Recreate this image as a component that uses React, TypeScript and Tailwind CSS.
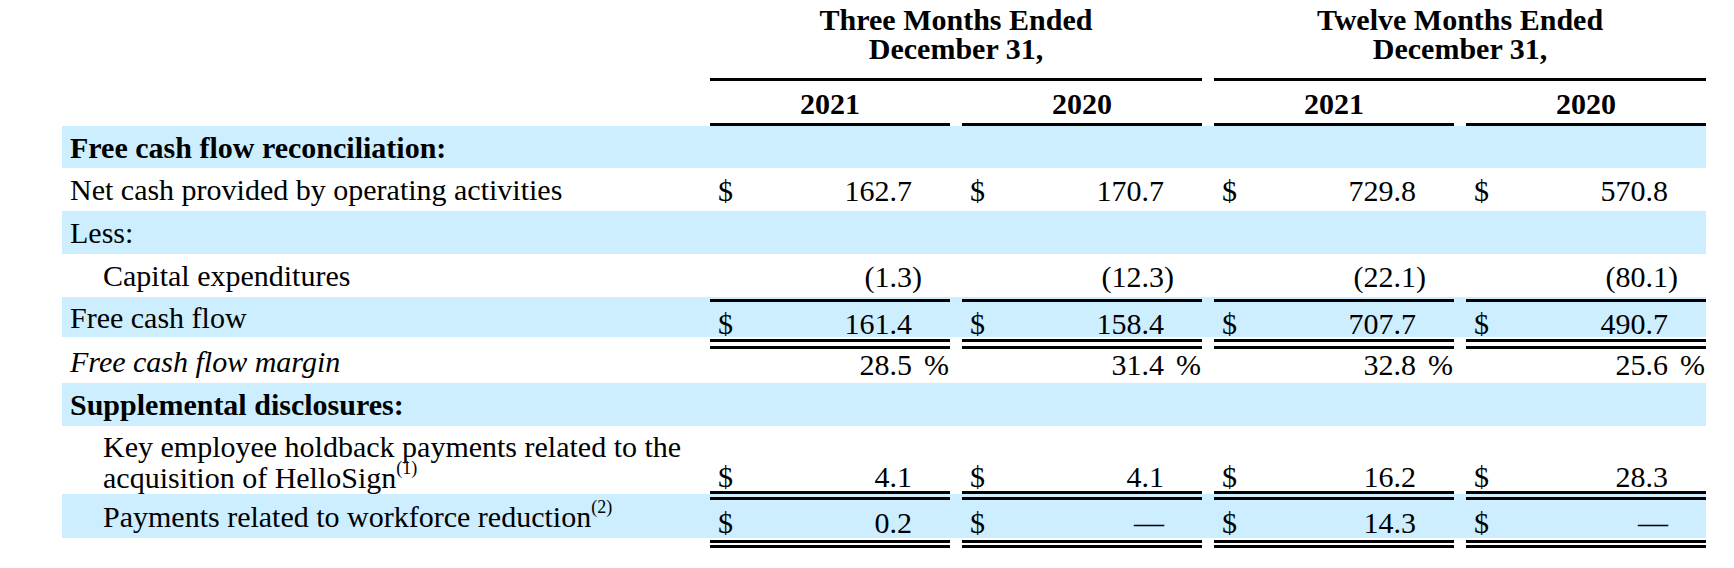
import React from "react"

type Cell = { d?: boolean; v?: string; s?: string; pct?: boolean }

const BLUE = "bg-[#cceeff]"

function ValueCell({
  c,
  top,
  bottom,
  textClass = "items-center",
}: {
  c?: Cell
  top?: string
  bottom?: boolean
  textClass?: string
}) {
  return (
    <div className="flex w-[240px] flex-col">
      {top && <div className={`${top} h-[3px] shrink-0 bg-black`} />}
      <div className={`flex flex-1 ${textClass}`}>
        <span className="w-[34px] pl-2">{c?.d ? "$" : ""}</span>
        <span className="flex-1 text-right">{c?.v}</span>
        <span className={`w-[38px] whitespace-pre ${c?.pct ? "pl-[12px]" : ""}`}>{c?.pct ? "%" : c?.s}</span>
      </div>
      {bottom && <div className="h-[3px] shrink-0 bg-black" />}
    </div>
  )
}

function Row({
  className,
  label,
  labelClass = "items-center pl-2",
  cells,
  top,
  bottom,
  textClass,
}: {
  className: string
  label?: React.ReactNode
  labelClass?: string
  cells?: Cell[]
  top?: string
  bottom?: boolean
  textClass?: string
}) {
  return (
    <div className={`flex ${className}`}>
      <div className={`flex w-[648px] ${labelClass}`}>{label}</div>
      {cells && (
        <div className="flex gap-[12px]">
          {cells.map((c, i) => (
            <ValueCell key={i} c={c} top={top} bottom={bottom} textClass={textClass} />
          ))}
        </div>
      )}
    </div>
  )
}

const groups = [
  { title: "Three Months Ended", years: ["2021", "2020"] },
  { title: "Twelve Months Ended", years: ["2021", "2020"] },
]

export default function App() {
  return (
    <div className="h-[568px] w-[1734px] bg-white pl-[62px] font-['Liberation_Serif','Times_New_Roman',serif] text-[30px] text-black">
      {/* column headers */}
      <div className="flex">
        <div className="w-[648px]" />
        <div className="flex gap-[12px]">
          {groups.map((g) => (
            <div key={g.title} className="flex w-[492px] flex-col">
              <div className="h-[81px] border-b-[3px] border-black pt-[5px] text-center font-bold leading-[29px]">
                {g.title}
                <br />
                December 31,
              </div>
              <div className="flex gap-[12px]">
                {g.years.map((y) => (
                  <div
                    key={y}
                    className="flex h-[45px] w-[240px] items-center justify-center border-b-[3px] border-black pt-[3px] font-bold"
                  >
                    {y}
                  </div>
                ))}
              </div>
            </div>
          ))}
        </div>
      </div>

      <div className="w-[1644px]">
        <Row className={`h-[42px] ${BLUE}`} labelClass="items-center pl-2 font-bold" label="Free cash flow reconciliation:" />
        <Row
          className="h-[43px]"
          label="Net cash provided by operating activities"
          cells={[
            { d: true, v: "162.7" },
            { d: true, v: "170.7" },
            { d: true, v: "729.8" },
            { d: true, v: "570.8" },
          ]}
        />
        <Row className={`h-[43px] ${BLUE}`} label="Less:" />
        <Row
          className="h-[43px]"
          labelClass="items-center pl-[41px]"
          label="Capital expenditures"
          bottom
          cells={[
            { v: "(1.3", s: ")" },
            { v: "(12.3", s: ")" },
            { v: "(22.1", s: ")" },
            { v: "(80.1", s: ")" },
          ]}
        />
        <Row
          className={`h-[40px] ${BLUE}`}
          label="Free cash flow"
          bottom
          textClass="items-center pt-[4px]"
          cells={[
            { d: true, v: "161.4" },
            { d: true, v: "158.4" },
            { d: true, v: "707.7" },
            { d: true, v: "490.7" },
          ]}
        />
        <Row
          className="h-[46px]"
          labelClass="items-center pl-2 pt-[2px] italic"
          label="Free cash flow margin"
          top="mt-[2px]"
          cells={[
            { v: "28.5", pct: true },
            { v: "31.4", pct: true },
            { v: "32.8", pct: true },
            { v: "25.6", pct: true },
          ]}
        />
        <Row className={`h-[43px] ${BLUE}`} labelClass="items-center pl-2 font-bold" label="Supplemental disclosures:" />
        <Row
          className="h-[68px]"
          labelClass="items-center pl-[41px] pt-[3px] leading-[31px]"
          label={
            <div>
              Key employee holdback payments related to the
              <br />
              acquisition of HelloSign
              <span className="relative -top-[14px] text-[18px] leading-none">(1)</span>
            </div>
          }
          bottom
          textClass="items-end leading-[28px]"
          cells={[
            { d: true, v: "4.1" },
            { d: true, v: "4.1" },
            { d: true, v: "16.2" },
            { d: true, v: "28.3" },
          ]}
        />
        <Row
          className={`h-[44px] ${BLUE}`}
          labelClass="items-center pl-[41px]"
          label={
            <div>
              Payments related to workforce reduction
              <span className="relative -top-[14px] text-[18px] leading-none">(2)</span>
            </div>
          }
          top="mt-[3px]"
          bottom
          cells={[
            { d: true, v: "0.2" },
            { d: true, v: "—" },
            { d: true, v: "14.3" },
            { d: true, v: "—" },
          ]}
        />
        <Row className="h-[5px]" top="mt-[2px]" cells={[{}, {}, {}, {}]} />
      </div>
    </div>
  )
}
